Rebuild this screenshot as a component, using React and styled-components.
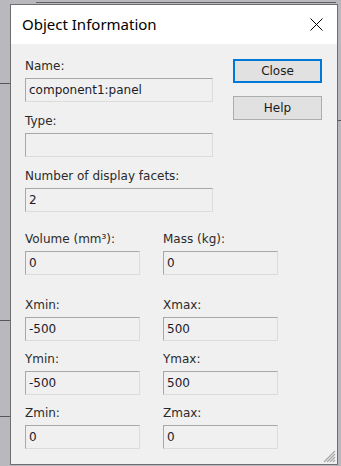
import React from 'react';
import styled, { createGlobalStyle } from 'styled-components';

const GlobalStyle = createGlobalStyle`
  html, body {
    margin: 0;
    padding: 0;
  }
  body {
    width: 341px;
    height: 466px;
    overflow: hidden;
    background-color: #b9b9bd;
    background-image:
      linear-gradient(#55555a, #55555a),
      linear-gradient(#55555a, #55555a),
      linear-gradient(#55555a, #55555a),
      linear-gradient(#55555a, #55555a),
      linear-gradient(#606064, #606064);
    background-size: 10px 1px, 10px 1px, 10px 1px, 4px 1px, 300px 1px;
    background-position: 0 83px, 0 320px, 0 416px, 337px 120px, 36px 2px;
    background-repeat: no-repeat;
    font-family: 'DejaVu Sans', Tahoma, sans-serif;
  }
`;

const Window = styled.div`
  position: relative;
  box-sizing: border-box;
  margin: 4px 0 0 10px;
  width: 328px;
  height: 461px;
  border: 1px solid #6e6e72;
  background: #f0f0f0;
  display: flex;
  flex-direction: column;
`;

const TitleBar = styled.div`
  height: 39px;
  background: #ffffff;
  display: flex;
  align-items: center;
  justify-content: space-between;
  padding: 0 14px 0 11px;
  flex-shrink: 0;
`;

const Title = styled.span`
  font-family: 'Noto Sans', 'Open Sans', sans-serif;
  font-size: 15px;
  color: #000;
  margin-top: -1px;
`;

const CloseX = styled.svg`
  width: 13px;
  height: 13px;
  display: block;
`;

const Body = styled.div`
  padding: 15px 14px 0 14px;
  display: flex;
  flex-direction: column;
`;

const TopRow = styled.div`
  display: flex;
  gap: 20px;
`;

const LeftColumn = styled.div`
  width: 188px;
  display: flex;
  flex-direction: column;
  gap: 12px;
`;

const ButtonColumn = styled.div`
  display: flex;
  flex-direction: column;
  gap: 13px;
`;

const Button = styled.button`
  box-sizing: border-box;
  width: 89px;
  height: 24px;
  background: #e1e1e1;
  border: ${(p) => (p.$default ? '2px solid #0078d7' : '1px solid #adadad')};
  font-family: 'DejaVu Sans', Tahoma, sans-serif;
  font-size: 12px;
  color: #1a1a1a;
  padding: 0;
  cursor: default;
`;

const Field = styled.div`
  display: flex;
  flex-direction: column;
  gap: 5px;
`;

const Label = styled.label`
  font-size: 12px;
  line-height: 14px;
  height: 14px;
  color: #2a2a2a;
  white-space: nowrap;
`;

const Box = styled.div`
  box-sizing: border-box;
  height: 24px;
  width: 100%;
  background: #f0f0f0;
  border-top: 1px solid #a8a8a8;
  border-left: 1px solid #a8a8a8;
  border-right: 1px solid #dcdcdc;
  border-bottom: 1px solid #dcdcdc;
  padding: 0 3px;
  font-size: 12px;
  line-height: 22px;
  color: #1c1a2a;
  white-space: nowrap;
  overflow: hidden;
`;

const Grid = styled.div`
  display: grid;
  grid-template-columns: 115px 115px;
  column-gap: 23px;
  margin-top: ${(p) => p.$top}px;
  row-gap: 11px;
`;

const Grip = styled.svg`
  position: absolute;
  right: 1px;
  bottom: 1px;
  width: 14px;
  height: 14px;
`;

const rows = [
  [
    ['Volume (mm³):', '0'],
    ['Mass (kg):', '0'],
  ],
  [
    ['Xmin:', '-500'],
    ['Xmax:', '500'],
  ],
  [
    ['Ymin:', '-500'],
    ['Ymax:', '500'],
  ],
  [
    ['Zmin:', '0'],
    ['Zmax:', '0'],
  ],
];

const App = () => {
  return (
    <>
      <GlobalStyle />
      <Window>
        <TitleBar>
          <Title>Object Information</Title>
          <CloseX viewBox="0 0 13 13">
            <path d="M0.5 0.5 L12.5 12.5 M12.5 0.5 L0.5 12.5" stroke="#000" strokeWidth="1" fill="none" />
          </CloseX>
        </TitleBar>
        <Body>
          <TopRow>
            <LeftColumn>
              <Field>
                <Label>Name:</Label>
                <Box>component1:panel</Box>
              </Field>
              <Field>
                <Label>Type:</Label>
                <Box />
              </Field>
              <Field>
                <Label>Number of display facets:</Label>
                <Box>2</Box>
              </Field>
            </LeftColumn>
            <ButtonColumn>
              <Button $default>Close</Button>
              <Button>Help</Button>
            </ButtonColumn>
          </TopRow>
          <Grid $top={20}>
            {rows[0].map(([label, value]) => (
              <Field key={label}>
                <Label>{label}</Label>
                <Box>{value}</Box>
              </Field>
            ))}
          </Grid>
          <Grid $top={23}>
            {rows.slice(1).flat().map(([label, value]) => (
              <Field key={label}>
                <Label>{label}</Label>
                <Box>{value}</Box>
              </Field>
            ))}
          </Grid>
        </Body>
        <Grip viewBox="0 0 14 14">
          <path
            d="M13 2 L2 13 M13 5 L5 13 M13 8 L8 13 M13 11 L11 13"
            stroke="#a8a8a8"
            strokeWidth="1.2"
            fill="none"
          />
        </Grip>
      </Window>
    </>
  );
};

export default App;
